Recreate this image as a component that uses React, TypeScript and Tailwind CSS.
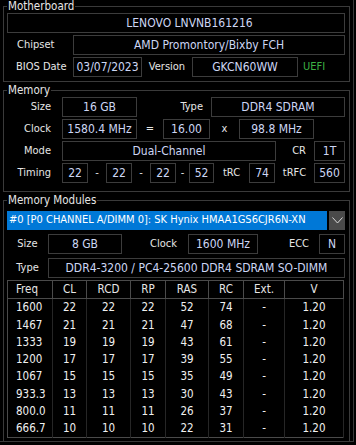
import { ReactNode } from 'react';

const font = "font-['DejaVu_Sans_Condensed','Liberation_Sans',sans-serif]";

const Field = ({ children, className = '' }: { children?: ReactNode; className?: string }) => (
  <div className={`h-[20px] border border-[#3c3c3c] flex items-center justify-center text-[12px] text-[#cdd6f4] whitespace-nowrap ${className}`}>
    {children}
  </div>
);

const Group = ({ title, children, className = '' }: { title: string; children: ReactNode; className?: string }) => (
  <fieldset className={`ml-[3px] w-[347px] border border-[#3a3a3a] pl-[3px] pr-[4px] ${className}`}>
    <legend className="px-[1px] leading-[13px] text-[11.5px] text-[#e6e6e6]">{title}</legend>
    {children}
  </fieldset>
);

const modules = [
  ['1600', '22', '22', '22', '52', '74', '-', '1.20'],
  ['1467', '21', '21', '21', '47', '68', '-', '1.20'],
  ['1333', '19', '19', '19', '43', '61', '-', '1.20'],
  ['1200', '17', '17', '17', '39', '55', '-', '1.20'],
  ['1067', '15', '15', '15', '35', '49', '-', '1.20'],
  ['933.3', '13', '13', '13', '30', '43', '-', '1.20'],
  ['800.0', '11', '11', '11', '26', '37', '-', '1.20'],
  ['666.7', '10', '10', '10', '22', '31', '-', '1.20'],
];

const headers = ['Freq', 'CL', 'RCD', 'RP', 'RAS', 'RC', 'Ext.', 'V'];
const widths = [45, 34, 44, 35, 43, 35, 41, 59];

export default function App() {
  return (
    <div className={`w-[356px] h-[445px] bg-black overflow-hidden text-[11px] text-[#e6e6e6] ${font}`}>
      <div className="w-[354px] h-[442px] border-r border-b border-[#3a3a3a]">
        {/* Motherboard */}
        <Group title="Motherboard" className="pb-[4px]">
          <div className="flex flex-col gap-[2px]">
            <Field className="pl-[27px]">LENOVO LNVNB161216</Field>
            <div className="flex items-center">
              <div className="w-[66px] pl-[10px]">Chipset</div>
              <Field className="flex-1">AMD Promontory/Bixby FCH</Field>
            </div>
            <div className="flex items-center">
              <div className="w-[66px] pl-[9px]">BIOS Date</div>
              <Field className="w-[69px]">03/07/2023</Field>
              <div className="w-[50px] text-center">Version</div>
              <Field className="w-[106px]">GKCN60WW</Field>
              <div className="pl-[5px] text-[#3cb043]">UEFI</div>
            </div>
          </div>
        </Group>

        {/* Memory */}
        <Group title="Memory" className="mt-[2px] pb-[8px]">
          <div className="flex flex-col gap-[2px]">
            <div className="flex items-center">
              <div className="w-[55px] pr-[11px] text-right">Size</div>
              <Field className="w-[75px]">16 GB</Field>
              <div className="flex-1 pr-[8px] text-right">Type</div>
              <Field className="w-[134px]">DDR4 SDRAM</Field>
            </div>
            <div className="flex items-center">
              <div className="w-[55px] pr-[11px] text-right">Clock</div>
              <Field className="w-[75px]">1580.4 MHz</Field>
              <div className="w-[26px] text-center">=</div>
              <Field className="w-[47px]">16.00</Field>
              <div className="w-[29px] text-center">x</div>
              <Field className="w-[75px]">98.8 MHz</Field>
            </div>
            <div className="flex items-center">
              <div className="w-[55px] pr-[11px] text-right">Mode</div>
              <Field className="w-[214px]">Dual-Channel</Field>
              <div className="w-[38px] pr-[8px] text-right">CR</div>
              <Field className="w-[31px]">1T</Field>
            </div>
            <div className="flex items-center">
              <div className="w-[55px] pr-[11px] text-right">Timing</div>
              <Field className="w-[26px]">22</Field>
              <div className="w-[18px] text-center">-</div>
              <Field className="w-[26px]">22</Field>
              <div className="w-[18px] text-center">-</div>
              <Field className="w-[26px]">22</Field>
              <div className="w-[13px] text-center">-</div>
              <Field className="w-[25px]">52</Field>
              <div className="w-[35px] text-center">tRC</div>
              <Field className="w-[26px]">74</Field>
              <div className="w-[39px] text-center">tRFC</div>
              <Field className="w-[31px]">560</Field>
            </div>
          </div>
        </Group>

        {/* Memory Modules */}
        <Group title="Memory Modules" className="mt-[2px] pt-[4px] pb-[3px]">
          <div className="flex items-center gap-[2px] h-[19px]">
            <div className="w-[320px] h-full bg-[#0078d7] text-white flex items-center pl-[2px] whitespace-nowrap overflow-hidden">
              #0 [P0 CHANNEL A/DIMM 0]: SK Hynix HMAA1GS6CJR6N-XN
            </div>
            <div className="flex-1 h-full bg-[#4a4a4a] flex items-center justify-center">
              <svg width="11" height="7" viewBox="0 0 11 7">
                <polyline points="0.5,0.5 5.5,6 10.5,0.5" fill="none" stroke="#d8d8d8" strokeWidth="1" />
              </svg>
            </div>
          </div>
          <div className="flex items-center mt-[4px]">
            <div className="w-[41px] text-center">Size</div>
            <Field className="w-[74px]">8 GB</Field>
            <div className="w-[66px] pr-[11px] text-right">Clock</div>
            <Field className="w-[70px]">1600 MHz</Field>
            <div className="w-[61px] pr-[10px] text-right">ECC</div>
            <Field className="w-[26px]">N</Field>
          </div>
          <div className="flex items-center mt-[4px]">
            <div className="w-[41px] text-center">Type</div>
            <Field className="flex-1">DDR4-3200 / PC4-25600 DDR4 SDRAM SO-DIMM</Field>
          </div>
          <table className="mt-[2px] w-[337px] table-fixed border-collapse border border-[#4a4a4a] text-[11.5px]">
            <colgroup>
              {widths.map((w, i) => (
                <col key={i} style={{ width: w }} />
              ))}
            </colgroup>
            <thead>
              <tr className="h-[18px]">
                {headers.map((h, i) => (
                  <th
                    key={h}
                    className={`font-normal border-r border-b border-[#4a4a4a] p-0 ${i === 0 ? 'text-left pl-[8px]' : 'text-center'}`}
                  >
                    {h}
                  </th>
                ))}
              </tr>
            </thead>
            <tbody>
              {modules.map((row, r) => (
                <tr key={r} className="h-[17px]">
                  {row.map((v, i) => (
                    <td
                      key={i}
                      className={`p-0 border-r border-[#262626] text-[#f0f0f0] ${i === 0 ? 'text-left pl-[8px]' : 'text-center'}`}
                    >
                      {v}
                    </td>
                  ))}
                </tr>
              ))}
            </tbody>
          </table>
        </Group>
      </div>
    </div>
  );
}
